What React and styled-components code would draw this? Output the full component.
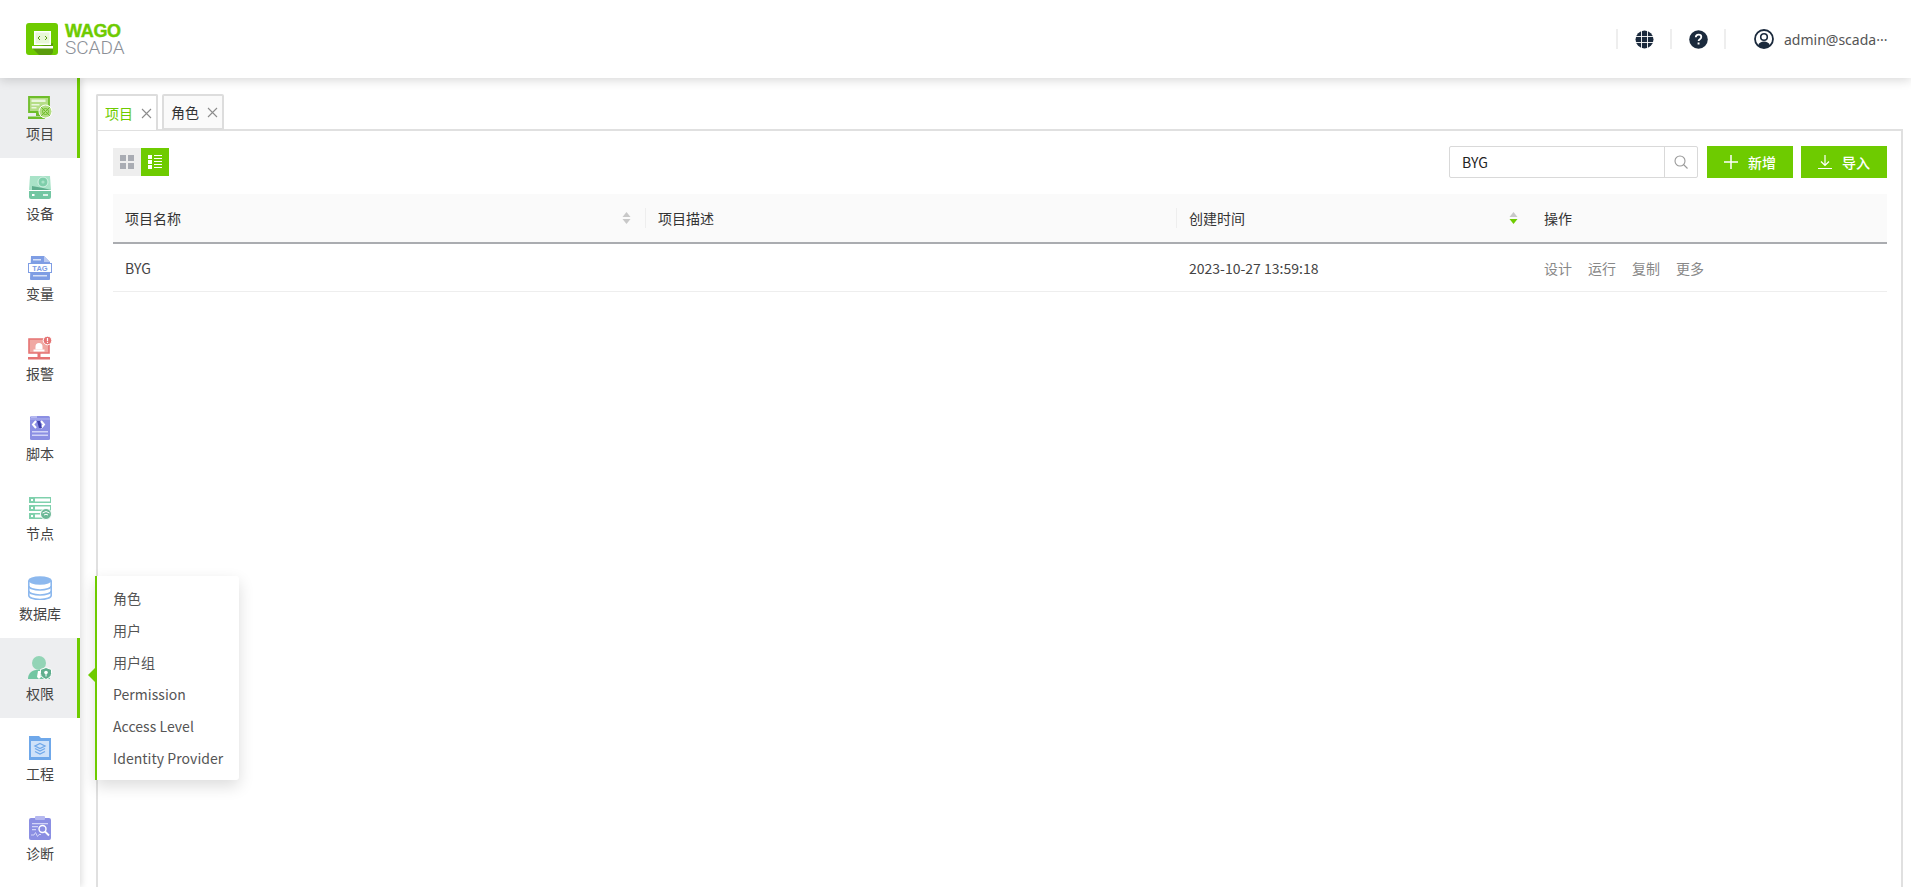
import styled, { createGlobalStyle } from 'styled-components'

const GREEN = '#6ecb00'
const FONT = '"Noto Sans CJK SC", "Noto Sans", sans-serif'
const COLUMNS = '532px 531px 356px 1fr'

const GlobalStyle = createGlobalStyle`
    html, body {
        margin: 0;
        padding: 0;
        height: 100%;
        background: #fff;
    }
    body {
        font-family: ${FONT};
        font-size: 14px;
        color: #333;
    }
    * {
        box-sizing: border-box;
    }
`

const Page = styled.div`
    height: 100vh;
    overflow: hidden;
    display: flex;
    flex-direction: column;
    position: relative;
`

const Header = styled.header`
    height: 78px;
    flex: none;
    display: flex;
    align-items: center;
    justify-content: space-between;
    padding-left: 26px;
    background: #fff;
    box-shadow: 0 2px 10px rgba(0, 0, 0, 0.16);
    position: relative;
    z-index: 3;
`

const Logo = styled.div`
    display: flex;
    align-items: center;
    gap: 7px;
`

const LogoText = styled.div`
    display: flex;
    flex-direction: column;
    line-height: 18px;
`

const LogoWago = styled.span`
    font-family: "Liberation Sans", Arial, sans-serif;
    font-size: 18px;
    font-weight: 700;
    color: ${GREEN};
    letter-spacing: -0.3px;
    -webkit-text-stroke: 0.4px ${GREEN};
`

const LogoScada = styled.span`
    font-family: Roboto, sans-serif;
    font-weight: 300;
    font-size: 19px;
    line-height: 17px;
    margin-top: -1px;
    color: #8b8f97;
`

const HeaderRight = styled.div`
    display: flex;
    align-items: center;
    height: 20px;
    padding-right: 16px;
`

const HeaderCell = styled.div`
    width: 54px;
    height: 20px;
    display: flex;
    align-items: center;
    justify-content: center;
    border-left: 2px solid #eee;
`

const UserBox = styled.div`
    width: 171px;
    display: flex;
    align-items: center;
    gap: 10px;
    height: 20px;
    padding-left: 28px;
    border-left: 2px solid #eee;
    color: #555;
    font-size: 14px;
    letter-spacing: 0.3px;
    white-space: nowrap;

    svg {
        flex: none;
    }
`

const UserName = styled.span`
    font-family: "Noto Sans", sans-serif;
    letter-spacing: 0;
`

const Body = styled.div`
    flex: 1;
    display: flex;
    min-height: 0;
    position: relative;
`

const Sidebar = styled.nav`
    width: 80px;
    flex: none;
    background: #fff;
    box-shadow: 2px 0 6px rgba(0, 0, 0, 0.12);
    position: relative;
    z-index: 2;
`

const NavItem = styled.div`
    height: 80px;
    display: flex;
    flex-direction: column;
    align-items: center;
    padding-top: 18px;
    font-size: 14px;
    line-height: 20px;
    color: #444;
    background: ${(p) => (p.$active ? '#edeef0' : 'transparent')};
    box-shadow: ${(p) => (p.$active ? `inset -3px 0 0 ${GREEN}` : 'none')};
    gap: 3px;
`

const NavIcon = styled.svg`
    width: 24px;
    height: 24px;
    flex: none;
    display: block;
`

const Main = styled.main`
    flex: 1;
    min-width: 0;
    padding: 16px 8px 0 16px;
    display: flex;
    flex-direction: column;
`

const TabBar = styled.div`
    display: flex;
    gap: 4px;
    height: 36px;
    flex: none;
    position: relative;
    z-index: 1;
`

const Tab = styled.div`
    width: 62px;
    height: 36px;
    display: flex;
    align-items: center;
    gap: 8px;
    padding-left: 7px;
    border-style: solid;
    border-color: #ddd;
    border-width: 2px 2px ${(p) => (p.$active ? '0' : '2px')} 2px;
    border-radius: 2px 2px 0 0;
    background: ${(p) => (p.$active ? '#fff' : '#fafafa')};
    color: ${(p) => (p.$active ? GREEN : '#333')};
    font-size: 14px;
`

const Panel = styled.section`
    flex: 1;
    margin-top: -1px;
    border: 2px solid #e0e0e0;
    border-bottom: 0;
    padding: 15px 14px 0 15px;
`

const Toolbar = styled.div`
    display: flex;
    align-items: center;
    justify-content: space-between;
    height: 32px;
    margin-bottom: 16px;
`

const ViewSwitch = styled.div`
    display: flex;
`

const ViewButton = styled.div`
    width: 28px;
    height: 28px;
    display: flex;
    align-items: center;
    justify-content: center;
    background: ${(p) => (p.$active ? GREEN : '#eeeeee')};
`

const Actions = styled.div`
    display: flex;
    gap: 8px;
`

const Search = styled.div`
    width: 249px;
    height: 32px;
    display: flex;
    border: 1px solid #d9d9d9;
    border-radius: 2px;
    margin-right: 1px;
`

const SearchInput = styled.div`
    flex: 1;
    padding-left: 12px;
    line-height: 31px;
    color: #222;
    font-size: 14px;
`

const SearchButton = styled.div`
    width: 33px;
    display: flex;
    align-items: center;
    justify-content: center;
    border-left: 1px solid #d9d9d9;
`

const Button = styled.div`
    width: 86px;
    height: 32px;
    display: flex;
    align-items: center;
    justify-content: center;
    gap: 10px;
    background: ${GREEN};
    color: #fff;
    font-size: 14px;
    font-weight: 500;
`

const Table = styled.div`
    display: flex;
    flex-direction: column;
`

const HeadRow = styled.div`
    display: grid;
    grid-template-columns: ${COLUMNS};
    height: 50px;
    background: #fafafa;
    border-bottom: 2px solid #aaacb0;
    align-items: center;
    color: #333;
`

const HeadCell = styled.div`
    display: flex;
    align-items: center;
    justify-content: space-between;
    height: 20px;
    padding: 0 14px 0 12px;
    border-left: ${(p) => (p.$divider ? '1px solid #eeeeee' : '0')};
`

const BodyRow = styled.div`
    display: grid;
    grid-template-columns: ${COLUMNS};
    height: 48px;
    border-bottom: 1px solid #eeeeee;
    align-items: center;
    color: #444;
`

const BodyCell = styled.div`
    padding-left: 12px;

    & + & {
        padding-left: 13px;
    }
`

const RowLinks = styled.div`
    display: flex;
    gap: 16px;
    padding-left: 12px;
    color: #888;
`

const Flyout = styled.div`
    position: absolute;
    left: 95px;
    top: 498px;
    width: 144px;
    height: 204px;
    padding: 6px 0;
    background: #fff;
    border-left: 2px solid ${GREEN};
    border-radius: 0 3px 3px 0;
    box-shadow: 0 6px 16px rgba(0, 0, 0, 0.14);
    z-index: 4;

    &::before {
        content: '';
        position: absolute;
        left: -9px;
        top: 92px;
        border-style: solid;
        border-width: 7px 7px 7px 0;
        border-color: transparent ${GREEN} transparent transparent;
    }
`

const FlyoutItem = styled.div`
    height: 32px;
    line-height: 32px;
    padding-left: 16px;
    color: #555;
    font-size: 14px;
    letter-spacing: 0.05px;
    white-space: nowrap;
`

const CloseIcon = () => (
    <svg width="11" height="11" viewBox="0 0 11 11">
        <path d="M1 1l9 9M10 1l-9 9" stroke="#8c8c8c" strokeWidth="1.1" fill="none" />
    </svg>
)

const SortIcon = ({ down }) => (
    <svg width="9" height="12" viewBox="0 0 9 12">
        <path d="M4.500 0l4 5h-8z" fill="#c8c8c8" />
        <path d="M4.500 12l4-5h-8z" fill={down ? GREEN : '#c8c8c8'} />
    </svg>
)

const navIcons = {
    project: (
        <NavIcon viewBox="0 0 24 24">
            <path d="M1 1h20v15H1z" fill="#b4dd86" stroke="#6ebd2a" strokeWidth="1.800" />
            <path d="M3.500 3.500h14v2.500h-14zM3.500 8h8v1.500h-8zM3.500 11h5v1.500h-5z" fill="#e9f6dc" />
            <path d="M8 16h5v4H8zM0 20.500h17V23H0z" fill="#6ebd2a" />
            <circle cx="17.500" cy="15.500" r="6.500" fill="#b4dd86" stroke="#fff" />
            <path d="M13.200 11.200l8.600 8.600M21.800 11.200l-8.600 8.600" stroke="#6ebd2a" />
            <circle cx="17.500" cy="15.500" r="3" fill="none" stroke="#6ebd2a" />
        </NavIcon>
    ),
    device: (
        <NavIcon viewBox="0 0 24 24">
            <path d="M2 0h20l1 14H1z" fill="#a9e3c8" />
            <circle cx="15" cy="6" r="5" fill="#7fceab" stroke="#d5f2e5" />
            <circle cx="15" cy="6" r="1.600" fill="#a9e3c8" />
            <path d="M4 10l11 2 8 2H4z" fill="#5fae8e" />
            <path d="M1 15h22v6a2 2 0 0 1-2 2H3a2 2 0 0 1-2-2z" fill="#72c6a2" />
            <path d="M4 18h2.500v2H4zM15 18.200h5v1.600h-5z" fill="#fff" />
        </NavIcon>
    ),
    tag: (
        <NavIcon viewBox="0 0 24 24">
            <path d="M3 0h13l6 6v17a1 1 0 0 1-1 1H3a1 1 0 0 1-1-1z" fill="#7e9de4" />
            <path d="M16 0l6 6h-6z" fill="#b9c9f0" />
            <path d="M5 3h8v1.500H5z" fill="#fff" opacity=".7" />
            <rect x=".5" y="7.500" width="23" height="9" fill="#fff" stroke="#7e9de4" />
            <text x="12" y="15" textAnchor="middle" fontSize="7.500" fontWeight="700" fontFamily="Liberation Sans, sans-serif" fill="#7e9de4">TAG</text>
            <path d="M5 19h14v1.500H5z" fill="#fff" opacity=".7" />
        </NavIcon>
    ),
    alarm: (
        <NavIcon viewBox="0 0 24 24">
            <path d="M1 3h20v14H1z" fill="#f0a8a2" stroke="#e57373" strokeWidth="1.600" />
            <path d="M7.500 13.500v-3a3.500 3.500 0 0 1 7 0v3z" fill="#fff" />
            <path d="M5.500 13.500h11v2h-11z" fill="#fff" />
            <path d="M9.500 17h3v4h-3zM0 21h22v2.400H0z" fill="#e57373" />
            <circle cx="19.500" cy="4.500" r="4.300" fill="#e57373" stroke="#fff" />
            <path d="M19.500 2v3.200M19.500 6.100v1" stroke="#fff" strokeWidth="1.200" />
        </NavIcon>
    ),
    script: (
        <NavIcon viewBox="0 0 24 24">
            <rect x="2" y="0" width="20" height="24" rx="1.500" fill="#8b8fe3" />
            <path d="M3 0h6v2H3z" fill="#b5b8f0" />
            <path d="M2 3h20" stroke="#b5b8f0" />
            <path d="M8 5l-3 3.500L8 12M13 5l3 3.500-3 3.500" stroke="#fff" strokeWidth="2" fill="none" />
            <path d="M9 5h3l2 7h-3z" fill="#3f3fa8" />
            <path d="M4 15h16v1.500H4zM4 18.500h16V20H4z" fill="#d3d5f7" />
        </NavIcon>
    ),
    node: (
        <NavIcon viewBox="0 0 24 24">
            <path d="M1 1h22v6H1zM1 9h22v6H1zM1 17h14v6H1z" fill="#7fd0ac" />
            <path d="M7 2.500h15v3H7zM7 10.500h15v3H7zM7 18.500h7v3H7z" fill="#fff" />
            <path d="M3 3h2v2H3zM3 11h2v2H3zM3 19h2v2H3z" fill="#fff" />
            <circle cx="18" cy="18" r="5.500" fill="#6cb897" stroke="#fff" />
            <path d="M14.500 17q3.500-3 7 0M16 19q2-1.500 4 0" stroke="#fff" fill="none" />
        </NavIcon>
    ),
    database: (
        <NavIcon viewBox="0 0 24 24">
            <path d="M.8 4.500v15c0 2.300 5 4 11.200 4s11.200-1.700 11.200-4v-15" fill="#fff" stroke="#8cb8ee" strokeWidth="1.600" />
            <ellipse cx="12" cy="4.500" rx="11.800" ry="4.200" fill="#8cb8ee" />
            <path d="M.8 10c0 2.300 5 4 11.200 4s11.200-1.700 11.200-4M.8 15c0 2.300 5 4 11.200 4s11.200-1.700 11.200-4" stroke="#8cb8ee" strokeWidth="1.600" fill="none" />
        </NavIcon>
    ),
    role: (
        <NavIcon viewBox="0 0 24 24">
            <circle cx="11" cy="7" r="7" fill="#93d4b6" />
            <path d="M0 23c0-6 4-8.500 8-9h6c4 .5 8 3 8 9z" fill="#72c6a2" />
            <path d="M10 15h2l1 6-2 2-2-2z" fill="#fff" />
            <path d="M18 11.500l5.500 2v4c0 3-2.500 4.500-5.500 6-3-1.500-5.500-3-5.500-6v-4z" fill="#5fae8e" stroke="#fff" />
            <circle cx="18" cy="16.500" r="1.800" fill="#fff" />
            <path d="M18 17.500v3" stroke="#fff" />
        </NavIcon>
    ),
    engineering: (
        <NavIcon viewBox="0 0 24 24">
            <path d="M1 0h10l2 2h10v22H1z" fill="#6fa8ea" />
            <path d="M3 5h18v16H3z" fill="#cfe2f9" />
            <path d="M12 7.500l5 2.500-5 2.500-5-2.500zM7 12.500l5 2.500 5-2.500M7 15.500l5 2.500 5-2.500" fill="none" stroke="#6fa8ea" strokeWidth="1.300" />
        </NavIcon>
    ),
    diagnose: (
        <NavIcon viewBox="0 0 24 24">
            <rect x="1" y="2" width="22" height="22" rx="2" fill="#8b8fe3" />
            <rect x="7" y="0" width="10" height="4" rx="1" fill="#b5b8f0" />
            <path d="M4 7h16v1.300H4zM4 10h6v1.300H4zM4 13h4v1.300H4z" fill="#d3d5f7" />
            <path d="M3 19h3l1.500-2.500 2 4 1.500-2h2" stroke="#d3d5f7" fill="none" />
            <circle cx="14.500" cy="13" r="3.500" fill="#8b8fe3" stroke="#fff" strokeWidth="1.400" />
            <path d="M17 15.500l4 4" stroke="#fff" strokeWidth="1.800" />
        </NavIcon>
    ),
}

const navItems = [
    { key: 'project', label: '项目', active: true },
    { key: 'device', label: '设备' },
    { key: 'tag', label: '变量' },
    { key: 'alarm', label: '报警' },
    { key: 'script', label: '脚本' },
    { key: 'node', label: '节点' },
    { key: 'database', label: '数据库' },
    { key: 'role', label: '权限', active: true },
    { key: 'engineering', label: '工程' },
    { key: 'diagnose', label: '诊断' },
]

const flyoutItems = ['角色', '用户', '用户组', 'Permission', 'Access Level', 'Identity Provider']

const App = () => {
    return (
        <Page>
            <GlobalStyle />
            <Header>
                <Logo>
                    <svg width="32" height="32" viewBox="0 0 32 32">
                        <rect width="32" height="32" rx="3" fill={GREEN} />
                        <path d="M27 20v8a4 4 0 0 1-4 4H13l-7-7z" fill="#5a9c0c" />
                        <rect x="8" y="8" width="17" height="14" fill="#fff" />
                        <rect x="9.500" y="9.500" width="14" height="11" fill="#e8f7d6" />
                        <path d="M14 13l-2 2 2 2M19 13l2 2-2 2" stroke="#5a9c0c" strokeWidth="1" fill="none" />
                        <path d="M6 23h21v2.500H6z" fill="#fff" />
                    </svg>
                    <LogoText>
                        <LogoWago>WAGO</LogoWago>
                        <LogoScada>SCADA</LogoScada>
                    </LogoText>
                </Logo>
                <HeaderRight>
                    <HeaderCell>
                        <svg width="19" height="19" viewBox="0 0 19 19">
                            <circle cx="9.500" cy="9.500" r="9" fill="#1b2a3d" />
                            <path d="M1 6.500h17M1 12.500h17M6.500 1v17M12.500 1v17" stroke="#fff" strokeWidth=".9" />
                        </svg>
                    </HeaderCell>
                    <HeaderCell>
                        <svg width="19" height="19" viewBox="0 0 19 19">
                            <circle cx="9.500" cy="9.500" r="9.300" fill="#1b2a3d" />
                            <path d="M6.800 7.300c0-1.700 1.200-2.600 2.800-2.600 1.500 0 2.700.9 2.700 2.300 0 2.200-2.700 2.100-2.700 4" stroke="#fff" strokeWidth="1.800" fill="none" />
                            <rect x="8.600" y="12.500" width="1.900" height="2" fill="#fff" />
                        </svg>
                    </HeaderCell>
                    <UserBox>
                        <svg width="20" height="20" viewBox="0 0 20 20">
                            <circle cx="10" cy="10" r="9" fill="#fff" stroke="#1b2a3d" strokeWidth="1.800" />
                            <circle cx="10" cy="8" r="3.300" fill="#fff" stroke="#1b2a3d" strokeWidth="1.600" />
                            <path d="M4 16.500c1-3 3.500-4 6-4s5 1 6 4a9 9 0 0 1-12 0z" fill="#1b2a3d" />
                        </svg>
                        <UserName>admin@scada···</UserName>
                    </UserBox>
                </HeaderRight>
            </Header>
            <Body>
                <Sidebar>
                    {navItems.map((item) => (
                        <NavItem key={item.key} $active={item.active}>
                            {navIcons[item.key]}
                            {item.label}
                        </NavItem>
                    ))}
                </Sidebar>
                <Main>
                    <TabBar>
                        <Tab $active>
                            项目
                            <CloseIcon />
                        </Tab>
                        <Tab>
                            角色
                            <CloseIcon />
                        </Tab>
                    </TabBar>
                    <Panel>
                        <Toolbar>
                            <ViewSwitch>
                                <ViewButton>
                                    <svg width="14" height="14" viewBox="0 0 14 14">
                                        <path d="M0 0h6v6H0zM8 0h6v6H8zM0 8h6v6H0zM8 8h6v6H8z" fill="#a9acb3" />
                                    </svg>
                                </ViewButton>
                                <ViewButton $active>
                                    <svg width="14" height="14" viewBox="0 0 14 14">
                                        <path d="M0 0h4v4H0zM0 5h4v4H0zM0 10h4v4H0zM6 0h8v1H6zM6 3h8v1H6zM6 6h8v1H6zM6 9h8v1H6zM6 12h8v1H6z" fill="#fff" />
                                    </svg>
                                </ViewButton>
                            </ViewSwitch>
                            <Actions>
                                <Search>
                                    <SearchInput>BYG</SearchInput>
                                    <SearchButton>
                                        <svg width="14" height="14" viewBox="0 0 14 14">
                                            <circle cx="6" cy="6" r="5" fill="none" stroke="#999" strokeWidth="1.100" />
                                            <path d="M9.500 9.500l4 4" stroke="#999" strokeWidth="1.100" />
                                        </svg>
                                    </SearchButton>
                                </Search>
                                <Button>
                                    <svg width="14" height="14" viewBox="0 0 14 14">
                                        <path d="M7 0v14M0 7h14" stroke="#fff" strokeWidth="1.500" />
                                    </svg>
                                    新增
                                </Button>
                                <Button>
                                    <svg width="14" height="14" viewBox="0 0 14 14">
                                        <path d="M7 0v10M3 6.500l4 4 4-4M0 13.500h14" stroke="#fff" strokeWidth="1.200" fill="none" />
                                    </svg>
                                    导入
                                </Button>
                            </Actions>
                        </Toolbar>
                        <Table>
                            <HeadRow>
                                <HeadCell>
                                    项目名称
                                    <SortIcon />
                                </HeadCell>
                                <HeadCell $divider>项目描述</HeadCell>
                                <HeadCell $divider>
                                    创建时间
                                    <SortIcon down />
                                </HeadCell>
                                <HeadCell>操作</HeadCell>
                            </HeadRow>
                            <BodyRow>
                                <BodyCell>BYG</BodyCell>
                                <BodyCell />
                                <BodyCell>2023-10-27 13:59:18</BodyCell>
                                <RowLinks>
                                    <span>设计</span>
                                    <span>运行</span>
                                    <span>复制</span>
                                    <span>更多</span>
                                </RowLinks>
                            </BodyRow>
                        </Table>
                    </Panel>
                </Main>
                <Flyout>
                    {flyoutItems.map((item) => (
                        <FlyoutItem key={item}>{item}</FlyoutItem>
                    ))}
                </Flyout>
            </Body>
        </Page>
    )
}

export default App
